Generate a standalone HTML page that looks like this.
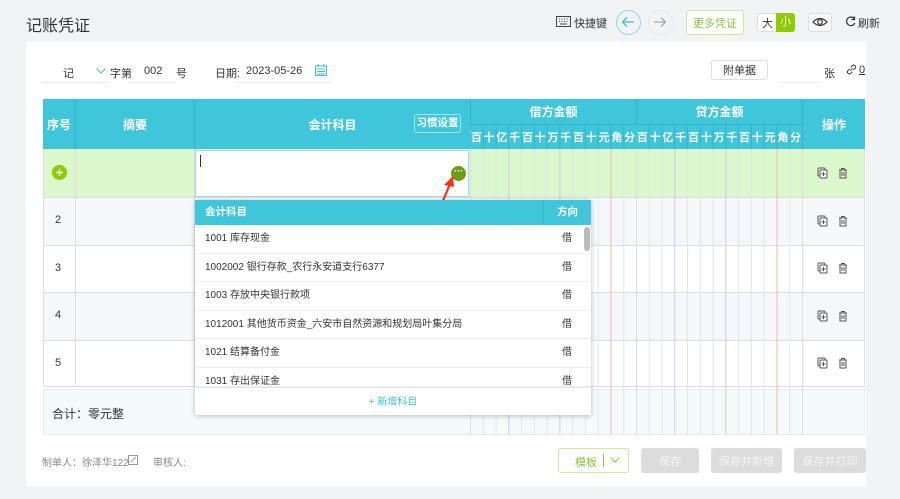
<!DOCTYPE html>
<html><head><meta charset="utf-8"><style>
*{margin:0;padding:0;box-sizing:border-box}
body{width:900px;height:499px;background:#f2f3f5;font-family:"Liberation Sans","Noto Sans CJK SC",sans-serif;position:relative;overflow:hidden;color:#333}
.a{position:absolute}
.t{font-size:11px;white-space:nowrap}
.card{left:26px;top:42px;width:840px;height:444px;background:#fff}
.th{background:#40c6db;color:#fff;font-weight:bold;font-size:12px;display:flex;align-items:center;justify-content:center}
.ul{border-bottom:1px solid #eaeaea}
.btn{border:1px solid #ddd;border-radius:3px;background:#fff;display:flex;align-items:center;justify-content:center;font-size:11px}
.gb{background:#dcdcdc;color:#f4f4f4;border-radius:3px;display:flex;align-items:center;justify-content:center;font-size:11px}
.di{font-size:11px;color:#fff;font-weight:bold;width:12.77px;text-align:center;top:129px}
.dd{left:195px;top:200px;width:396px;height:215px;background:#fff;box-shadow:0 1px 5px rgba(0,0,0,.25)}
.it{position:absolute;left:0;width:396px;height:28.5px;border-bottom:1px solid #eee;font-size:10px;color:#333;padding-left:10px;line-height:28px}
.it span{position:absolute;left:367px}
</style></head><body>
<div class="a" style="left:26px;top:12px;font-size:16px;color:#333">记账凭证</div>
<svg class="a" style="left:556px;top:16px" width="15" height="11"><rect x=".5" y=".5" width="14" height="10" fill="none" stroke="#444"/><path d="M3 3h1M5.5 3h1M8 3h1M10.5 3h1M3 5.5h1M5.5 5.5h1M8 5.5h1M10.5 5.5h1M4 8h7" stroke="#444"/></svg>
<div class="a t" style="left:574px;top:15px;color:#333">快捷键</div>
<div class="a" style="left:616px;top:10px;width:25px;height:25px;border:1px solid #8fd6e6;border-radius:50%"></div>
<svg class="a" style="left:621px;top:16px" width="14" height="12"><path d="M13 6H2M6 1.5L1.5 6 6 10.5" fill="none" stroke="#40bcd8" stroke-width="1.3"/></svg>
<div class="a" style="left:648px;top:10px;width:25px;height:25px;border:1px solid #e6e6e6;border-radius:50%"></div>
<svg class="a" style="left:653px;top:16px" width="14" height="12"><path d="M1 6h11M8 1.5L12.5 6 8 10.5" fill="none" stroke="#aaa" stroke-width="1.3"/></svg>
<div class="a btn" style="left:686px;top:10px;width:58px;height:25px;border-color:#cbe996;color:#8cc63f">更多凭证</div>
<div class="a" style="left:757px;top:13px;width:38px;height:19px;border:1px solid #ddd;border-radius:3px;background:#fff"></div>
<div class="a t" style="left:762px;top:15px">大</div>
<div class="a" style="left:776px;top:13px;width:19px;height:19px;background:#8ccc00;border-radius:0 3px 3px 0;color:#fff;font-size:11px;text-align:center;line-height:19px">小</div>
<div class="a" style="left:808px;top:13px;width:24px;height:19px;border:1px solid #ddd;border-radius:3px;background:#f7f7f7"></div>
<svg class="a" style="left:812px;top:16px" width="16" height="12"><path d="M1 6Q8-1 15 6Q8 13 1 6Z" fill="none" stroke="#333" stroke-width="1.2"/><circle cx="8" cy="6" r="2.3" fill="none" stroke="#333" stroke-width="1.2"/></svg>
<svg class="a" style="left:845px;top:16px" width="11" height="11"><path d="M9.5 3A4.3 4.3 0 1 0 9.8 7" fill="none" stroke="#333" stroke-width="1.2"/><path d="M9.5 0.5V3.5H6.5" fill="none" stroke="#333" stroke-width="1.2"/></svg>
<div class="a t" style="left:858px;top:15px">刷新</div>

<div class="a card"></div>
<div class="a ul" style="left:42px;top:60px;width:67px;height:23px"></div>
<div class="a t" style="left:63px;top:65px">记</div>
<svg class="a" style="left:96px;top:68px" width="10" height="6"><path d="M.5.5L5 5 9.5.5" fill="none" stroke="#40bcd8"/></svg>
<div class="a t" style="left:110px;top:65px">字第</div>
<div class="a ul" style="left:128px;top:60px;width:48px;height:23px"></div>
<div class="a t" style="left:144px;top:65px">002</div>
<div class="a t" style="left:176px;top:65px">号</div>
<div class="a t" style="left:215px;top:65px">日期:</div>
<div class="a ul" style="left:236px;top:60px;width:95px;height:23px"></div>
<div class="a t" style="left:246px;top:65px">2023-05-26</div>
<svg class="a" style="left:315px;top:64px" width="12" height="12"><rect x=".5" y="2" width="11" height="9.5" fill="none" stroke="#40bcd8"/><path d="M3 0v3M9 0v3M2 5h8M2 7.5h8M2 10h8" stroke="#40bcd8"/></svg>
<div class="a btn" style="left:711px;top:60px;width:57px;height:20px">附单据</div>
<div class="a ul" style="left:780px;top:60px;width:40px;height:23px"></div>
<div class="a t" style="left:824px;top:65px">张</div>
<svg class="a" style="left:846px;top:64px" width="11" height="11"><path d="M4.5 6.5L6.5 4.5M3.5 5L1.8 6.7a2 2 0 0 0 2.8 2.8L6.3 7.8M7.5 6L9.2 4.3a2 2 0 0 0-2.8-2.8L4.7 3.2" fill="none" stroke="#333"/></svg>
<div class="a t" style="left:859px;top:64px;text-decoration:underline">0</div>

<div class="a th" style="left:43px;top:99px;width:822px;height:50px"></div>
<div class="a th" style="left:43px;top:99px;width:32px;height:50px">序号</div>
<div class="a th" style="left:75px;top:99px;width:119px;height:50px;border-left:1px solid #38b3c6">摘要</div>
<div class="a th" style="left:194px;top:99px;width:276px;height:50px;border-left:1px solid #38b3c6">会计科目</div>
<div class="a" style="left:414px;top:114px;width:47px;height:19px;border:1px solid #a6e3ed;border-radius:3px;color:#fff;font-size:10.5px;font-weight:bold;text-align:center;line-height:17px">习惯设置</div>
<div class="a th" style="left:470px;top:99px;width:166px;height:25px;border-left:1px solid #38b3c6">借方金额</div>
<div class="a th" style="left:636px;top:99px;width:166px;height:25px;border-left:1px solid #38b3c6">贷方金额</div>
<div class="a th" style="left:802px;top:99px;width:63px;height:50px;border-left:1px solid #38b3c6">操作</div>
<div class="a" style="left:470px;top:124px;width:332px;height:1px;background:#38b3c6"></div>
<div class="a" style="left:43px;top:149px;width:822px;height:48px;background:#dbf7cc"></div>
<div class="a" style="left:43px;top:197px;width:822px;height:48px;background:#f6f7fb;border-top:1px solid #ddd"></div>
<div class="a" style="left:43px;top:245px;width:822px;height:47px;background:#fff;border-top:1px solid #ddd"></div>
<div class="a" style="left:43px;top:292px;width:822px;height:48px;background:#f6f7fb;border-top:1px solid #ddd"></div>
<div class="a" style="left:43px;top:340px;width:822px;height:47px;background:#fff;border-top:1px solid #ddd;border-bottom:1px solid #ddd"></div>
<div class="a" style="left:43px;top:389px;width:822px;height:46px;background:#f5fbfb;border:1px solid #e6eeee"></div>
<svg class="a" style="left:0;top:124px" width="900" height="312" id="g"></svg>
<div class="a" style="left:43px;top:149px;width:1px;height:238px;background:#ddd"></div>
<div class="a" style="left:75px;top:149px;width:1px;height:238px;background:#ddd"></div>
<div class="a" style="left:194px;top:149px;width:1px;height:238px;background:#ddd"></div>
<div class="a" style="left:864px;top:149px;width:1px;height:238px;background:#ddd"></div>
<div id="digits"></div>
<svg class="a" style="left:52px;top:165px" width="15" height="15"><circle cx="7.5" cy="7.5" r="7.5" fill="#8ccc00"/><path d="M7.5 4v7M4 7.5h7" stroke="#fff" stroke-width="1.4"/></svg>
<div class="a t" style="left:55px;top:214px">2</div>
<div class="a t" style="left:55px;top:262px">3</div>
<div class="a t" style="left:55px;top:309px">4</div>
<div class="a t" style="left:55px;top:357px">5</div>
<div class="a" style="left:195px;top:150px;width:274px;height:47px;background:#fff;border:1px solid #9fdce6"></div>
<div class="a" style="left:200px;top:155px;width:1px;height:12px;background:#333"></div>
<div class="a" style="left:451px;top:166px;width:15px;height:15px;border-radius:50%;background:#6b9c13;color:#fff;font-size:9px;text-align:center;line-height:11px;font-weight:bold">···</div>
<svg class="a" style="left:436px;top:174px" width="22" height="36"><path d="M4 34L14 10" stroke="#f0341c" stroke-width="2.2"/><path d="M17 2L8 11L18 13Z" fill="#f0341c"/></svg>
<div id="ops"></div>
<div class="a" style="left:52px;top:405px;font-size:12px;color:#333">合计：零元整</div>

<div class="a dd">
<div class="a" style="left:0;top:0;width:396px;height:25px;background:#40c6db;color:#fff;font-size:10.5px;font-weight:bold;line-height:25px;padding-left:10px">会计科目<div class="a" style="left:348px;top:0;width:48px;height:25px;border-left:1px solid #38b3c6;text-align:center">方向</div></div>
<div class="it" style="top:25px">1001 库存现金<span>借</span></div>
<div class="it" style="top:53.5px">1002002 银行存款_农行永安道支行6377<span>借</span></div>
<div class="it" style="top:82px">1003 存放中央银行款项<span>借</span></div>
<div class="it" style="top:110.5px">1012001 其他货币资金_六安市自然资源和规划局叶集分局<span>借</span></div>
<div class="it" style="top:139px">1021 结算备付金<span>借</span></div>
<div class="it" style="top:167.5px;height:19.5px;overflow:hidden">1031 存出保证金<span>借</span></div>
<div class="a" style="left:389px;top:27px;width:6px;height:24px;border-radius:3px;background:#bbb"></div>
<div class="a" style="left:0;top:187px;width:396px;height:1px;background:#e4e4e4"></div>
<div class="a" style="left:0;top:193px;width:396px;text-align:center;color:#40bcd8;font-size:10px">+ 新增科目</div>
</div>

<div class="a t" style="left:42px;top:454px;color:#888;font-size:10px">制单人：徐泽华122</div>
<svg class="a" style="left:128px;top:455px" width="10" height="10"><rect x=".5" y=".5" width="9" height="9" fill="none" stroke="#999"/><path d="M3 7L8 2" stroke="#999"/></svg>
<div class="a t" style="left:153px;top:454px;color:#888;font-size:10px">审核人:</div>
<div class="a" style="left:558px;top:448px;width:71px;height:25px;border:1px solid #cbe996;border-radius:3px"></div>
<div class="a t" style="left:575px;top:454px;color:#8cc63f">模板</div>
<div class="a" style="left:603px;top:454px;width:1px;height:13px;background:#8cc63f"></div>
<svg class="a" style="left:610px;top:457px" width="10" height="6"><path d="M.5.5L5 5 9.5.5" fill="none" stroke="#8cc63f"/></svg>
<div class="a gb" style="left:641px;top:448px;width:58px;height:25px">保存</div>
<div class="a gb" style="left:711px;top:448px;width:71px;height:25px">保存并新增</div>
<div class="a gb" style="left:794px;top:448px;width:72px;height:25px">保存并打印</div>
<script>
var d='百十亿千百十万千百十元角分'.split(''),h='',s='',w=166/13;
for(var k=0;k<2;k++)for(var i=0;i<13;i++){var x=470+k*166+i*w;
h+='<div class="a di" style="left:'+x+'px">'+d[i]+'</div>';
if(i>0){var c=(i==3||i==7)?'#d2c6f2':(i==11?'#f4b8b8':'#e1e6ee');s+='<line x1="'+(x+.5)+'" y1="25" x2="'+(x+.5)+'" y2="311" stroke="'+c+'"/>';
s+='<line x1="'+(x+.5)+'" y1="0" x2="'+(x+.5)+'" y2="25" stroke="#38b3c6"/>';}}
[470,636,802].forEach(function(x){s+='<line x1="'+(x+.5)+'" y1="25" x2="'+(x+.5)+'" y2="311" stroke="#ddd"/>';});
document.getElementById('g').innerHTML=s;document.getElementById('digits').innerHTML=h;
var o='';[173,221,268,316,363].forEach(function(y){o+='<svg class="a" style="left:817px;top:'+(y-6)+'px" width="11" height="12"><rect x="1" y="1" width="7" height="8" rx="1" fill="none" stroke="#555"/><rect x="3" y="3" width="7" height="8" rx="1" fill="#fff" stroke="#555"/><path d="M6.5 5v4M4.5 7h4" stroke="#555"/></svg><svg class="a" style="left:838px;top:'+(y-6)+'px" width="10" height="12"><path d="M1 3h8M3.5 3V1.5h3V3M2 3v8h6V3M4 5v4M6 5v4" fill="none" stroke="#555"/></svg>';});
document.getElementById('ops').innerHTML=o;
</script>
</body></html>
